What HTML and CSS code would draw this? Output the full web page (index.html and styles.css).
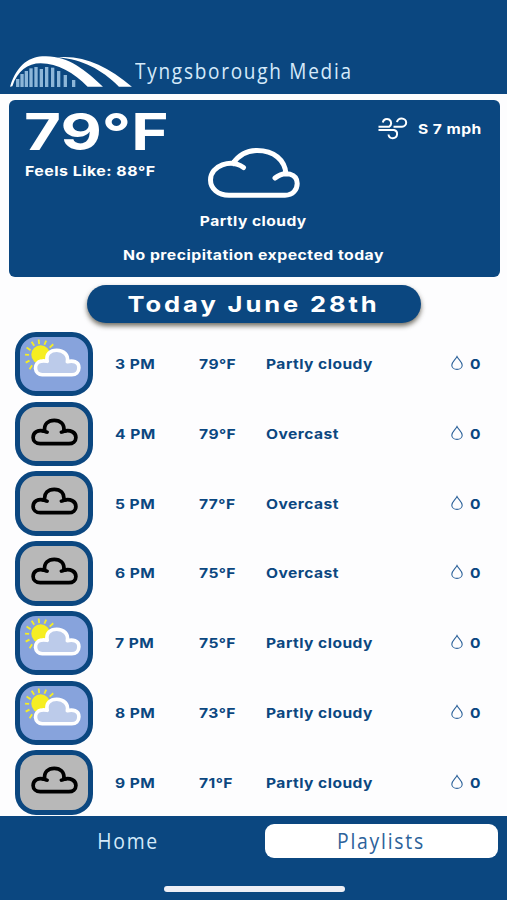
FILE: index.html
```html
<!DOCTYPE html>
<html lang="en">
<head>
<meta charset="utf-8">
<title>Tyngsborough Media</title>
<link rel="stylesheet" href="styles.css">
</head>
<body>
<svg class="defs" aria-hidden="true">
  <symbol id="partly" viewBox="0 0 68 54">
    <g stroke="#f6ee22" stroke-width="1.8" fill="none"><path d="M5 17.500l4 .3M5.600 25.500l3.800-2M9.500 32l2.500-4M6.500 10.500l4 2.600M11.500 4.800l2.600 4M18.500 2.500l.5 4.500M26 3.500l-1.800 4.200M33 7.200l-3.600 3.300"/></g>
    <circle cx="20.500" cy="17.500" r="9.300" fill="#f6ee22"/>
    <path d="M22 37.500a6.800 6.800 0 0 1-1-13.500c2-.5 4-.3 6 .2C25.500 17 30 13.200 36.500 13.200S48.500 17.500 47 24.500c5-1.300 11.500-.5 11.500 6 0 4.500-3 7-7 7z" fill="#bccbea" stroke="#fff" stroke-width="3.600" stroke-linejoin="round"/>
  </symbol>
  <symbol id="overcast" viewBox="0 0 68 54">
    <path d="M20 36.500c-4 0-7-2.700-7-6.200 0-5.500 5-8 11.500-6.300C23.500 17 28 13.200 34 13.200S44.500 17 43.500 24C50 22.500 55.500 25 55.500 30.300c0 3.700-3 6.200-7 6.200z" fill="none" stroke="#000" stroke-width="3.700"/>
    <path d="M23 24l4 1M45 24l-4 1" stroke="#000" stroke-width="3.500" stroke-linecap="round"/>
  </symbol>
  <symbol id="drop" viewBox="0 0 14 16">
    <path d="M7 1.500C5.500 4.600 1.800 7 1.800 10.200a5.200 4.200 0 0 0 10.400 0C12.200 7 8.500 4.600 7 1.500z" fill="none" stroke="#2c629a" stroke-width="1.100"/>
  </symbol>
</svg>
<header class="top">
  <svg class="logo" viewBox="0 0 400 100">
    <g stroke="#b9dcf5" stroke-width="10" stroke-dasharray="4.500 1.500">
      <path d="M53 98V75M66 98V60M79 98V50M93 98V43M108 98V38M124 98V46M140 98V38M158 98V41M176 98V52M196 98V64M221 98V78"/>
    </g>
    <path d="M30 98C52 28 92 6 138 7C208 8 255 48 309 98H263C220 55 174 29 122 28C83 28 52 51 37 97z" fill="#fff"/>
    <path d="M172 10C250 2 320 35 396 98H357C302 45 250 17 172 10z" fill="#fff"/>
  </svg>
  <h1 class="brand">Tyngsborough Media</h1>
</header>
<main class="content">
  <section class="now">
    <div class="now-top">
      <div class="reading">
        <div class="temp">79°F</div>
        <div class="feels">Feels Like: 88°F</div>
      </div>
      <svg class="now-cloud" viewBox="0 0 92 50"><path d="M35.500 19.500C23 10.500 2.500 17.500 2.500 32C2.500 40.500 10 47.200 21 47.200H77C85 47.200 89.200 41.500 89.200 35.500C89.200 26 77 22 67 30M25 15.500C31 6.500 39 2.500 49 2.500C66 2.500 77 12 78 26" fill="none" stroke="#fff" stroke-width="5" stroke-linecap="round"/></svg>
      <div class="wind">
        <svg class="wind-icon" viewBox="0 0 30 23"><path d="M.5 9.800H11A4.200 4.200 0 1 0 4.800 5.500M15.500 9.800H24A4.600 4.200 0 1 0 19 5.200M.5 13H16A4.300 4.200 0 1 1 10.500 17.500" fill="none" stroke="#fff" stroke-width="2"/></svg>
        <span class="wind-text">S 7 mph</span>
      </div>
    </div>
    <div class="condition"><span>Partly cloudy</span></div>
    <div class="precip"><span>No precipitation expected today</span></div>
  </section>
  <h2 class="day"><span>Today June 28th</span></h2>
  <ul class="hours">
    <li class="hour"><svg class="tile sunny"><use href="#partly"/></svg><span>3 PM</span><span>79°F</span><span>Partly cloudy</span><svg class="drop"><use href="#drop"/></svg><span>0</span></li>
    <li class="hour"><svg class="tile"><use href="#overcast"/></svg><span>4 PM</span><span>79°F</span><span>Overcast</span><svg class="drop"><use href="#drop"/></svg><span>0</span></li>
    <li class="hour"><svg class="tile"><use href="#overcast"/></svg><span>5 PM</span><span>77°F</span><span>Overcast</span><svg class="drop"><use href="#drop"/></svg><span>0</span></li>
    <li class="hour"><svg class="tile"><use href="#overcast"/></svg><span>6 PM</span><span>75°F</span><span>Overcast</span><svg class="drop"><use href="#drop"/></svg><span>0</span></li>
    <li class="hour"><svg class="tile sunny"><use href="#partly"/></svg><span>7 PM</span><span>75°F</span><span>Partly cloudy</span><svg class="drop"><use href="#drop"/></svg><span>0</span></li>
    <li class="hour"><svg class="tile sunny"><use href="#partly"/></svg><span>8 PM</span><span>73°F</span><span>Partly cloudy</span><svg class="drop"><use href="#drop"/></svg><span>0</span></li>
    <li class="hour"><svg class="tile"><use href="#overcast"/></svg><span>9 PM</span><span>71°F</span><span>Partly cloudy</span><svg class="drop"><use href="#drop"/></svg><span>0</span></li>
  </ul>
</main>
<footer class="bottom">
  <nav class="tabs">
    <a class="tab"><span>Home</span></a>
    <a class="tab active"><span>Playlists</span></a>
  </nav>
  <div class="home-bar"></div>
</footer>
</body>
</html>
```
FILE: styles.css
```css
* { box-sizing: border-box; }
body {
  margin: 0;
  height: 900px;
  display: flex;
  flex-direction: column;
  overflow: hidden;
  background: #fdfdfe;
  font-family: Inter, "Liberation Sans", sans-serif;
  font-weight: 700;
  color: #0b4780;
}
.defs { display: none; }
h1, h2, ul { margin: 0; padding: 0; list-style: none; }

.top {
  height: 94px;
  flex: none;
  padding-top: 53px;
  display: flex;
  align-items: flex-start;
  background: #0b4780;
}
.logo { width: 133.300px; height: 33.300px; flex: none; margin-top: 1px; }
.brand {
  font: 400 22px/34px "Open Sans", sans-serif;
  letter-spacing: 2px;
  white-space: nowrap;
  margin-left: 2px;
  color: #d5eafa;
  transform: scaleX(.864);
  transform-origin: left;
}

.content { height: 722px; flex: none; padding: 5.500px 7.500px 0 8.500px; overflow: hidden; }
.now {
  height: 177px;
  padding: 6.500px 17px 0 16px;
  border-radius: 6px;
  background: #0b4780;
  color: #fff;
}
.now-top { display: grid; grid-template-columns: 183px 170px 1fr; height: 102px; }
.temp {
  font-weight: 700;
  font-size: 51px;
  line-height: 52px;
  white-space: nowrap;
  transform: scaleX(1.250);
  transform-origin: left;
  margin-left: -1px;
}
.feels, .wind-text, .condition span, .precip span, .hour span {
  display: block;
  font-size: 13.500px;
  line-height: 20px;
  letter-spacing: .4px;
  white-space: nowrap;
  transform: scaleX(1.155);
}
.feels { margin-top: 3px; transform: scaleX(1.180); transform-origin: left; }
.precip span { transform: scaleX(1.170); }
.now-cloud { width: 92px; height: 50px; margin-top: 42px; }
.wind { display: flex; height: 24px; margin-top: 11px; }
.wind-icon { width: 30px; height: 23px; flex: none; }
.wind-text { margin: 2px 0 0 10px; transform-origin: left; }
.condition, .precip { display: flex; justify-content: center; }
.condition { margin-top: 2.500px; }
.precip { margin-top: 14px; }

.day {
  width: 334px;
  height: 38px;
  margin: 8.500px auto 0 78.500px;
  border-radius: 19px;
  background: #0b4780;
  color: #fff;
  display: flex;
  align-items: center;
  justify-content: center;
  font-size: 22px;
  line-height: 36px;
  padding-bottom: 1px;
  font-weight: 700;
  letter-spacing: 2.500px;
  box-shadow: 0 3px 5px rgba(40, 35, 20, .65);
}
.day span { transform: scaleX(1.160); white-space: nowrap; }

.hours { padding: 9px 0 0 6px; display: grid; gap: 5.400px; }
.hour {
  height: 64.350px;
  display: grid;
  grid-template-columns: 100px 84px 67px 184px 20px 1fr;
  align-items: center;
}
.hour span { transform-origin: left; }
.tile {
  width: 78.500px;
  height: 64.350px;
  padding: 0;
  border: 5.300px solid #0b4780;
  border-radius: 21px;
  background: #b8b8b8;
}
.tile.sunny { background: #87a3dc; }
.drop { width: 14px; height: 16px; margin-bottom: 2px; }

.bottom { height: 84px; flex: none; background: #0b4780; padding: 8px 9px 0; }
.tabs { display: grid; grid-template-columns: 238px 233.500px; gap: 17.500px; }
.tab {
  height: 33.500px;
  border-radius: 9px;
  display: flex;
  align-items: center;
  justify-content: center;
  font: 400 22px/33px "Open Sans", sans-serif;
  letter-spacing: 2px;
  color: #d5eafa;
  padding-bottom: 1.500px;
}
.tab span { transform: scaleX(.88); }
.tab.active { background: #fff; color: #2c629a; }
.home-bar { width: 181px; height: 6px; margin: 28px auto 0 154.500px; border-radius: 3px; background: #eeeff5; }
```
